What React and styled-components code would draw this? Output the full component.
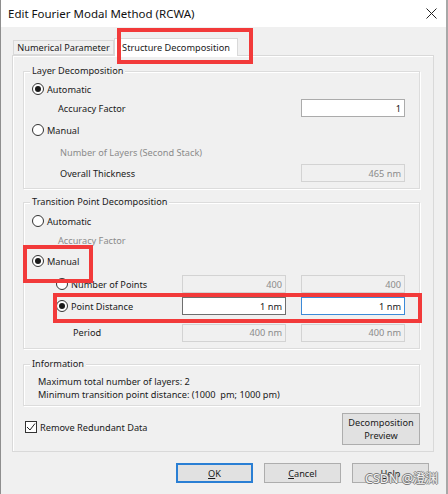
import React from "react";
import styled, { createGlobalStyle } from "styled-components";

const Global = createGlobalStyle`
  html, body { margin: 0; padding: 0; background: #f0f0f0; }
  body { font-family: "Noto Sans", "Open Sans", sans-serif; }
  * { box-sizing: border-box; }
`;

const Window = styled.div`
  position: relative;
  width: 448px;
  height: 494px;
  background: #f0f0f0;
  border-left: 1px solid #8e8e8e;
  border-right: 2px solid #a8a8a8;
  display: flex;
  flex-direction: column;
  overflow: hidden;
  color: #1a1a1a;
  font-size: 9.2px;
`;

const TitleBar = styled.div`
  height: 27px;
  background: #fff;
  display: flex;
  align-items: center;
  justify-content: space-between;
  padding: 0 9px 0 7px;
  font-size: 11.5px;
  color: #111;
`;

const Body = styled.div`
  padding: 11px 0 0 11px;
  display: flex;
  flex-direction: column;
`;

const TabStrip = styled.div`
  height: 17px;
  display: flex;
  align-items: flex-end;
  padding-left: 1px;
  position: relative;
  z-index: 1;
`;

const Tab = styled.div`
  width: ${(p) => p.$w}px;
  height: ${(p) => (p.$active ? "18px" : "15px")};
  margin-bottom: ${(p) => (p.$active ? "-1px" : "0")};
  display: flex;
  align-items: center;
  justify-content: center;
  background: ${(p) => (p.$active ? "#fff" : "#f0f0f0")};
  border: 1px solid #d9d9d9;
  border-bottom: ${(p) => (p.$active ? "none" : "1px solid #d9d9d9")};
  color: #1a1a1a;
  white-space: nowrap;
`;

const TabPanel = styled.div`
  width: 422px;
  height: 397px;
  border: 1px solid #d9d9d9;
  box-shadow: inset 1px 1px 0 #fff;
  background: #f0f0f0;
  padding: 15px 13px 0 10px;
  display: flex;
  flex-direction: column;
`;

const Group = styled.div`
  position: relative;
  margin-top: ${(p) => p.$mt || 0}px;
  border: 1px solid #dcdcdc;
  box-shadow: inset 1px 1px 0 #fff, 1px 1px 0 #fff;
  padding: ${(p) => p.$pt || 8}px 14px ${(p) => p.$pb || 4}px 8px;
  display: flex;
  flex-direction: column;
`;

const Legend = styled.span`
  position: absolute;
  top: -8px;
  left: 6px;
  padding: 0 2px;
  line-height: 14px;
  background: #f0f0f0;
  color: #1a1a1a;
`;

const Row = styled.div`
  height: ${(p) => p.$h}px;
  margin-top: ${(p) => p.$mt || 0}px;
  display: grid;
  grid-template-columns: 1fr 104px 104px;
  column-gap: 15px;
  align-items: center;
`;

const LabelCell = styled.div`
  display: flex;
  align-items: center;
  padding-left: ${(p) => p.$indent || 0}px;
  color: ${(p) => (p.$disabled ? "#8b8b8b" : "#1a1a1a")};
  white-space: nowrap;
`;

const RadioCircle = styled.span`
  width: 12px;
  height: 12px;
  border-radius: 50%;
  border: 1px solid #333;
  background: #fff;
  display: inline-flex;
  align-items: center;
  justify-content: center;
  margin-right: 3px;
  flex: none;
  &::after {
    content: "";
    width: 6px;
    height: 6px;
    border-radius: 50%;
    background: ${(p) => (p.$checked ? "#1a1a1a" : "transparent")};
  }
`;

const Field = styled.div`
  grid-column: ${(p) => p.$col};
  height: 18px;
  border: 1px solid
    ${(p) => (p.$focused ? "#3c8ad8" : p.$disabled ? "#d3d3d3" : p.$dark ? "#6e6e6e" : "#ababab")};
  background: ${(p) => (p.$disabled ? "#f0f0f0" : "#fff")};
  color: ${(p) => (p.$disabled ? "#8b8b8b" : "#1a1a1a")};
  display: flex;
  align-items: center;
  justify-content: flex-end;
  padding-right: 3px;
`;

const InfoLine = styled.div`
  line-height: 13px;
  color: #1a1a1a;
  padding-left: 6px;
`;

const BottomRow = styled.div`
  margin-top: 7px;
  height: 32px;
  display: flex;
  align-items: center;
  justify-content: space-between;
  padding-left: 2px;
`;

const CheckRow = styled.label`
  display: flex;
  align-items: center;
  gap: 3px;
  margin-top: -4px;
`;

const CheckBox = styled.span`
  width: 12px;
  height: 12px;
  border: 1px solid #333;
  background: #fff;
  display: inline-flex;
  align-items: center;
  justify-content: center;
`;

const Button = styled.div`
  width: ${(p) => p.$w || 77}px;
  height: ${(p) => p.$h || 20}px;
  border: 1px solid ${(p) => (p.$default ? "#2a7fd4" : "#adadad")};
  box-shadow: ${(p) => (p.$default ? "inset 0 0 0 1px #2a7fd4" : "none")};
  background: #e1e1e1;
  display: flex;
  align-items: center;
  justify-content: center;
  text-align: center;
  line-height: 13px;
  color: #1a1a1a;
`;

const ButtonRow = styled.div`
  margin-top: 11px;
  display: flex;
  gap: 11px;
  padding-left: 164px;
`;

const Mark = styled.div`
  position: absolute;
  left: ${(p) => p.$x}px;
  top: ${(p) => p.$y}px;
  width: ${(p) => p.$w}px;
  height: ${(p) => p.$h}px;
  border: 4px solid #f23a3a;
  pointer-events: none;
  z-index: 5;
`;

const Watermark = styled.div`
  position: absolute;
  left: 364px;
  top: 468px;
  font-size: 12.5px;
  color: #f4f4f4;
  text-shadow: 1px 0 0 #7d7d7d, -1px 0 0 #7d7d7d, 0 1px 0 #7d7d7d, 0 -1px 0 #7d7d7d;
  font-family: "Noto Sans", "Noto Sans CJK SC", sans-serif;
  z-index: 6;
`;

const U = styled.span`
  text-decoration: underline;
`;

const Radio = ({ checked, children, indent, disabled }) => (
  <LabelCell $indent={indent} $disabled={disabled}>
    <RadioCircle $checked={checked} />
    {children}
  </LabelCell>
);

export default function App() {
  return (
    <>
      <Global />
      <Window>
        <TitleBar>
          <span>Edit Fourier Modal Method (RCWA)</span>
          <svg width="11" height="11" viewBox="0 0 11 11">
            <path d="M0.5 0.5 L10.5 10.5 M10.5 0.5 L0.5 10.5" stroke="#222" strokeWidth="1" />
          </svg>
        </TitleBar>
        <Body>
          <TabStrip>
            <Tab $w={101}>Numerical Parameter</Tab>
            <Tab $w={124} $active>Structure Decomposition</Tab>
          </TabStrip>
          <TabPanel>
            <Group $pt={8} $pb={4}>
              <Legend>Layer Decomposition</Legend>
              <Row $h={18}>
                <Radio checked>Automatic</Radio>
              </Row>
              <Row $h={20}>
                <LabelCell $indent={26}>Accuracy Factor</LabelCell>
                <Field $col={3}>1</Field>
              </Row>
              <Row $h={24}>
                <Radio>Manual</Radio>
              </Row>
              <Row $h={20}>
                <LabelCell $indent={28} $disabled>Number of Layers (Second Stack)</LabelCell>
              </Row>
              <Row $h={22}>
                <LabelCell $indent={28}>Overall Thickness</LabelCell>
                <Field $col={3} $disabled>465 nm</Field>
              </Row>
            </Group>

            <Group $mt={13} $pt={8} $pb={5}>
              <Legend>Transition Point Decomposition</Legend>
              <Row $h={20}>
                <Radio>Automatic</Radio>
              </Row>
              <Row $h={19}>
                <LabelCell $indent={26} $disabled>Accuracy Factor</LabelCell>
              </Row>
              <Row $h={22}>
                <Radio checked>Manual</Radio>
              </Row>
              <Row $h={24}>
                <Radio indent={24}>Number of Points</Radio>
                <Field $col={2} $disabled>400</Field>
                <Field $col={3} $disabled>400</Field>
              </Row>
              <Row $h={20}>
                <Radio indent={24} checked>Point Distance</Radio>
                <Field $col={2} $dark>1 nm</Field>
                <Field $col={3} $focused>1 nm</Field>
              </Row>
              <Row $h={21} $mt={6}>
                <LabelCell $indent={41}>Period</LabelCell>
                <Field $col={2} $disabled>400 nm</Field>
                <Field $col={3} $disabled>400 nm</Field>
              </Row>
            </Group>

            <Group $mt={15} $pt={10} $pb={4}>
              <Legend>Information</Legend>
              <InfoLine>Maximum total number of layers: 2</InfoLine>
              <InfoLine>Minimum transition point distance: (1000&nbsp; pm; 1000 pm)</InfoLine>
            </Group>

            <BottomRow>
              <CheckRow>
                <CheckBox>
                  <svg width="10" height="10" viewBox="0 0 10 10">
                    <path d="M1 5 L4 8 L9 1.5" fill="none" stroke="#222" strokeWidth="1" />
                  </svg>
                </CheckBox>
                Remove Redundant Data
              </CheckRow>
              <Button $w={78} $h={32}>
                Decomposition
                <br />
                Preview
              </Button>
            </BottomRow>
          </TabPanel>
          <ButtonRow>
            <Button $default>
              <span><U>O</U>K</span>
            </Button>
            <Button>
              <span><U>C</U>ancel</span>
            </Button>
            <Button>
              <span><U>H</U>elp</span>
            </Button>
          </ButtonRow>
        </Body>
        <Mark $x={116} $y={28} $w={136} $h={36} />
        <Mark $x={22} $y={245} $w={70} $h={38} />
        <Mark $x={52} $y={293} $w={369} $h={30} />
        <Watermark>CSDN @澄渊</Watermark>
      </Window>
    </>
  );
}
